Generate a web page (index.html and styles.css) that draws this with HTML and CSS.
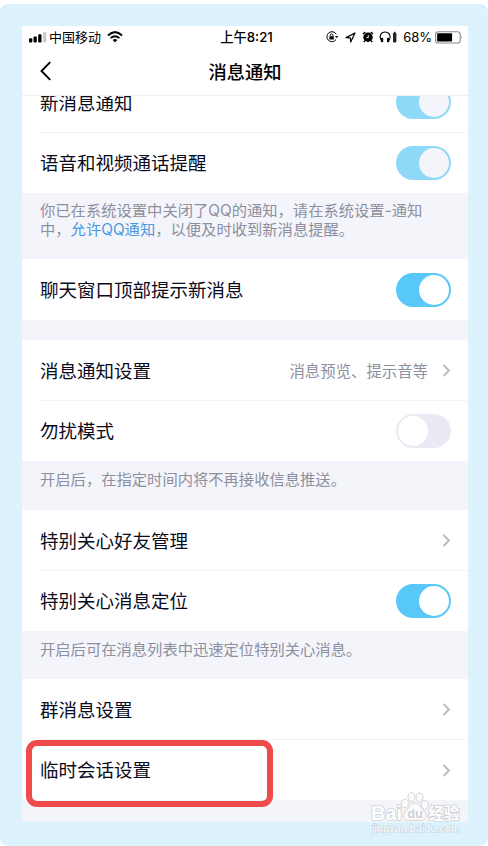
FILE: index.html
```html
<!DOCTYPE html>
<html lang="zh-CN">
<head>
    <meta charset="UTF-8">
    <meta name="viewport" content="width=device-width, initial-scale=1.0">
    <title>消息通知</title>
    <link rel="stylesheet" href="styles.css">
</head>
<body>
    <div class="frame">
        <div class="phone">
            <div class="header">
                <div class="status-bar">
                    <div class="status-left">
                        <svg class="signal" width="18" height="11" viewBox="0 0 18 11">
                            <rect x="0" y="6.3" width="3.3" height="4.2" rx="1"/>
                            <rect x="4.5" y="4.4" width="3.3" height="6.1" rx="1"/>
                            <rect x="9.2" y="2.2" width="3.3" height="8.3" rx="1"/>
                            <rect x="14" y="0" width="3.3" height="10.5" rx="1" fill="#ccc"/>
                        </svg>
                        <span class="carrier">中国移动</span>
                        <svg class="wifi" width="16" height="12" viewBox="0 0 16 12">
                            <path d="M1 4.4 Q8 -2 15 4.4" fill="none" stroke="#000" stroke-width="2.1"/>
                            <path d="M3.6 7.1 Q8 3.3 12.4 7.1" fill="none" stroke="#000" stroke-width="1.9"/>
                            <path d="M5.7 9 Q8 7.2 10.3 9 L8 11.4z"/>
                        </svg>
                    </div>
                    <div class="time">上午8:21</div>
                    <div class="status-right">
                        <svg width="12" height="12" viewBox="0 0 12 12">
                            <path d="M10.3 3.3 A5 5 0 1 0 10 8.6" fill="none" stroke="#000" stroke-width="1"/>
                            <path d="M9 5h3.2l-1.6 2.2z"/>
                            <rect x="3.4" y="5.2" width="4.4" height="3.4" rx=".4"/>
                            <path d="M4.3 5.4V4.2a1.3 1.3 0 0 1 2.6 0v1.2" fill="none" stroke="#000" stroke-width=".9"/>
                        </svg>
                        <svg class="location" width="11" height="11" viewBox="0 0 11 11">
                            <path d="M1 5.6 L10 1 L5.7 10 L5.3 5.8z" fill="none" stroke="#000" stroke-width="1.2" stroke-linejoin="round"/>
                        </svg>
                        <svg class="alarm" width="12" height="12" viewBox="0 0 12 12">
                            <circle cx="6" cy="6.3" r="4.7"/>
                            <path d="M1 3 3.2 1.1M11 3 8.8 1.1M2.8 9.6 1.8 11M9.2 9.6l1 1.4" stroke="#000" stroke-width="1.4"/>
                            <path d="M6.3 4v2.6H4.3" fill="none" stroke="#fff" stroke-width=".9"/>
                        </svg>
                        <svg class="headset" width="18" height="12" viewBox="0 0 18 12">
                            <path d="M2.4 9.6C-.6 4.8 2.3 1 6.1 1s6.7 3.8 3.7 8.6" fill="none" stroke="#000" stroke-width="1.1"/>
                            <rect x="2" y="6.8" width="2.2" height="4.4" rx=".8"/>
                            <rect x="8" y="6.8" width="2.2" height="4.4" rx=".8"/>
                            <rect x="14" y="1.8" width="3.4" height="9.6" rx=".8" fill="#222"/>
                            <rect x="15" y=".8" width="1.4" height="1.5" fill="#222"/>
                        </svg>
                        <span class="percent">68%</span>
                        <svg class="battery" width="28" height="13" viewBox="0 0 28 13">
                            <rect x=".6" y=".8" width="24.6" height="11.2" rx="2.8" fill="none" stroke="#8c8c8c" stroke-width="1.1"/>
                            <rect x="2.1" y="2.3" width="15" height="8.2" rx="1"/>
                            <path d="M26.4 4.8q1.6 1.6 0 3.2z" fill="#8c8c8c"/>
                        </svg>
                    </div>
                </div>
                <div class="nav">
                    <svg class="back" width="12" height="20" viewBox="0 0 12 20">
                        <path d="M10.2 1.2 1.5 10l8.7 8.8" fill="none" stroke="#000" stroke-width="1.9"/>
                    </svg>
                    <h1>消息通知</h1>
                </div>
            </div>

            <div class="list">
                <div class="row">
                    <span class="label">新消息通知</span>
                    <span class="switch on disabled"></span>
                </div>
                <div class="row">
                    <span class="label">语音和视频通话提醒</span>
                    <span class="switch on disabled"></span>
                </div>
                <p class="note note-long">你已在系统设置中关闭了QQ的通知，请在系统设置-通知<br>中，<a>允许QQ通知</a>，以便及时收到新消息提醒。</p>

                <div class="row single">
                    <span class="label">聊天窗口顶部提示新消息</span>
                    <span class="switch on"></span>
                </div>
                <div class="gap"></div>

                <div class="row">
                    <span class="label">消息通知设置</span>
                    <span class="value">消息预览、提示音等</span>
                    <svg class="arrow" width="9" height="14" viewBox="0 0 9 14"><path d="M1.500 2 7 7.500 1.500 13"/></svg>
                </div>
                <div class="row">
                    <span class="label">勿扰模式</span>
                    <span class="switch"></span>
                </div>
                <p class="note note-dnd">开启后，在指定时间内将不再接收信息推送。</p>

                <div class="row">
                    <span class="label">特别关心好友管理</span>
                    <svg class="arrow" width="9" height="14" viewBox="0 0 9 14"><path d="M1.500 2 7 7.500 1.500 13"/></svg>
                </div>
                <div class="row">
                    <span class="label">特别关心消息定位</span>
                    <span class="switch on"></span>
                </div>
                <p class="note">开启后可在消息列表中迅速定位特别关心消息。</p>

                <div class="row">
                    <span class="label">群消息设置</span>
                    <svg class="arrow" width="9" height="14" viewBox="0 0 9 14"><path d="M1.500 2 7 7.500 1.500 13"/></svg>
                </div>
                <div class="row">
                    <span class="label">临时会话设置</span>
                    <svg class="arrow" width="9" height="14" viewBox="0 0 9 14"><path d="M1.500 2 7 7.500 1.500 13"/></svg>
                </div>
            </div>
        </div>

        <div class="marker"></div>

        <svg class="watermark" width="100" height="50" viewBox="0 0 100 50">
            <g fill="#fbfbfc" stroke="#d5d6da" stroke-width="1">
                <ellipse cx="39" cy="13.5" rx="3.4" ry="4.3"/>
                <ellipse cx="45.5" cy="7" rx="3.4" ry="4.4"/>
                <ellipse cx="53.5" cy="7.3" rx="3.4" ry="4.4"/>
                <ellipse cx="58.7" cy="15" rx="3.4" ry="4.3"/>
                <path d="M49 13c5 0 5.5 4.500 9 8 4.500 4.500 2 9.500-3 9.500H43c-6 0-7-5.500-3-9.500 3.500-3.500 4-8 9-8z"/>
            </g>
            <g class="watermark-text">
                <text x="5" y="29.5" font-size="20">Bai</text>
                <text class="watermark-du" x="41.5" y="28" font-size="12.5">du</text>
                <text x="62.5" y="28.5" font-size="15.5">经验</text>
            </g>
            <text class="watermark-url" x="6" y="41.5" font-size="11" textLength="88">jingyan.baidu.com</text>
        </svg>
    </div>
</body>
</html>
```
FILE: styles.css
```css
* {
    box-sizing: border-box;
}
body {
    margin: 0;
    padding-top: 4px;
    background-color: #fff;
    font-family: "Noto Sans CJK SC", sans-serif;
}
.frame {
    position: relative;
    height: 842px;
    padding: 22px 20px 24px 22px;
    background-color: #dcf2fd;
    border-radius: 8px;
}
.phone {
    height: 796px;
    overflow: hidden;
    background-color: #f4f5fa;
}
.header {
    position: relative;
    z-index: 1;
    height: 70px;
    background-color: #fff;
    border-bottom: 1px solid #f0f0f2;
}
.status-bar {
    display: grid;
    grid-template-columns: 1fr auto 1fr;
    align-items: center;
    height: 22px;
    padding: 0 5px 0 7px;
    font-family: Inter, "Noto Sans CJK SC", sans-serif;
    font-size: 13px;
    line-height: 22px;
}
.status-left,
.status-right {
    display: flex;
    align-items: center;
}
.status-right {
    justify-content: flex-end;
}
.carrier {
    margin: 0 6px 0 2px;
}
.time {
    padding-left: 1px;
    font-size: 13.3px;
    font-weight: 500;
}
.location {
    margin-left: 7px;
}
.alarm {
    margin-left: 6px;
}
.headset {
    margin-left: 5px;
}
.percent {
    margin: 0 3px 0 6px;
}
.nav {
    display: grid;
    grid-template-columns: 40px 1fr 40px;
    align-items: center;
    height: 46px;
}
.back {
    margin-left: 18px;
}
h1 {
    margin: 0;
    text-align: center;
    font-size: 18.3px;
    font-weight: 500;
    line-height: 46px;
}
.list {
    margin-top: -24px;
}
.row {
    display: flex;
    align-items: center;
    height: 60px;
    padding: 0 17.5px 0 18px;
    background-color: #fff;
    color: #090b1c;
}
.row + .row {
    height: 61px;
    background-image: linear-gradient(#f4f4f7, #f4f4f7);
    background-size: 100% 1px;
    background-position: 18px 0;
    background-repeat: no-repeat;
}
.row.single {
    height: 61px;
}
.label {
    flex: 1;
    padding-bottom: 1px;
    font-size: 18.5px;
    font-weight: 400;
    line-height: 28px;
}
.value {
    margin-right: 13.5px;
    color: #8d8f9f;
    font-size: 15.4px;
}
.arrow {
    fill: none;
    stroke: #b5b7c5;
    stroke-width: 1.8;
}
.switch {
    width: 55px;
    height: 34px;
    padding: 2px;
    border-radius: 17px;
    background-color: #e9eaf3;
}
.switch::before {
    content: "";
    display: block;
    width: 30px;
    height: 30px;
    border-radius: 50%;
    background-color: #fff;
}
.switch.on {
    background-color: #58c8f9;
}
.switch.on::before {
    margin-left: 21.5px;
}
.switch.disabled {
    background-color: #8ed9f7;
}
.switch.disabled::before {
    background-color: #f4f5fb;
}
.note {
    height: 48px;
    margin: 0;
    padding: 10px 18px 0;
    color: #8d8f9f;
    font-family: Inter, "Noto Sans CJK SC", sans-serif;
    font-size: 15.3px;
    line-height: 18.5px;
}
.note-long {
    height: 66px;
    padding-top: 9px;
}
.note-dnd {
    height: 49px;
}
.note a {
    color: #4c98e4;
}
.gap {
    height: 20px;
}
.marker {
    position: absolute;
    left: 26px;
    top: 736px;
    width: 247px;
    height: 67px;
    border: 6px solid #ee4b4a;
    border-radius: 11px;
}
.watermark {
    position: absolute;
    left: 366px;
    top: 786px;
}
.watermark-text {
    font-family: "Liberation Sans", "Noto Sans CJK SC", sans-serif;
    font-weight: bold;
    fill: #fff;
    stroke: #cfd0d5;
    stroke-width: 1.6;
    paint-order: stroke;
}
.watermark-du {
    fill: #cfd0d5;
    stroke: none;
}
.watermark-url {
    font-family: "Liberation Sans", sans-serif;
    fill: #fff;
    stroke: #c0d3de;
    stroke-width: 1.2;
    paint-order: stroke;
}
```
